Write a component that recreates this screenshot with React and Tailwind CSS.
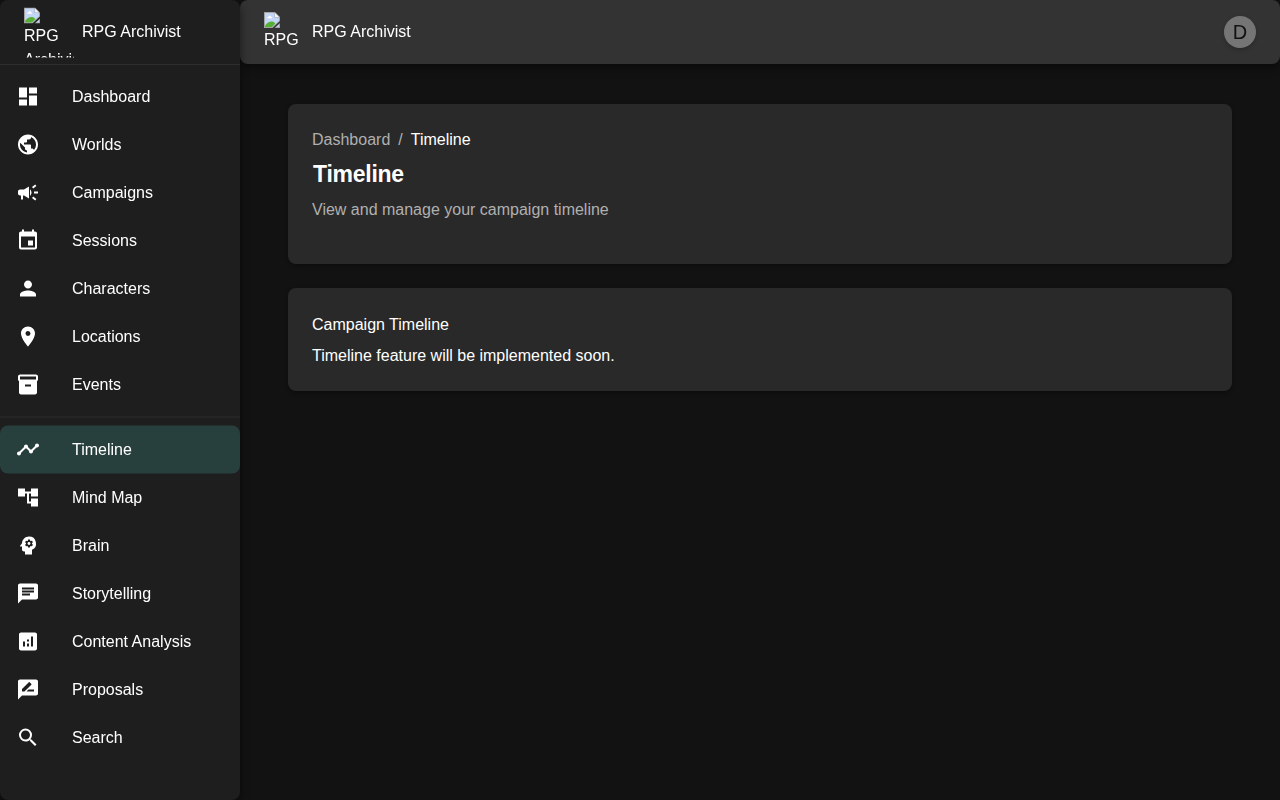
import React from "react";
import {
  MdDashboard,
  MdPublic,
  MdCampaign,
  MdEvent,
  MdPerson,
  MdLocationOn,
  MdInventory2,
  MdTimeline,
  MdAccountTree,
  MdPsychology,
  MdChat,
  MdAnalytics,
  MdRateReview,
  MdSearch,
} from "react-icons/md";

const primary = [
  ["Dashboard", MdDashboard],
  ["Worlds", MdPublic],
  ["Campaigns", MdCampaign],
  ["Sessions", MdEvent],
  ["Characters", MdPerson],
  ["Locations", MdLocationOn],
  ["Events", MdInventory2],
];

const secondary = [
  ["Timeline", MdTimeline],
  ["Mind Map", MdAccountTree],
  ["Brain", MdPsychology],
  ["Storytelling", MdChat],
  ["Content Analysis", MdAnalytics],
  ["Proposals", MdRateReview],
  ["Search", MdSearch],
];

function MissingImageIcon() {
  return (
    <svg width="16" height="16" viewBox="0 0 16 16" className="block">
      {/* page, upper-left of the tear */}
      <path d="M0 0h11l5 5v4L8.500 16H0z" fill="#a3a3a3" />
      <path d="M1 1h9.500v4.500H15V9L8 15H1z" fill="#c3d6f7" />
      <path d="M11 1v4h4z" fill="#f5f5f5" />
      <path d="M3 6.200c0-1 .8-1.400 1.400-1.300C4.700 3.500 6.800 3.500 7.200 4.900 8.200 4.900 8.400 6.200 7.800 6.200z" fill="#fff" />
      <path d="M1 15v-1.500C3 11 5 9.500 7.500 9.500c1.500 0 2.700.6 3.800 2L8 15z" fill="#57b035" />
      {/* torn-off corner */}
      <path d="M16 11v5h-5.500z" fill="#a3a3a3" />
      <path d="M15 12.500V15h-2.800z" fill="#c3d6f7" />
    </svg>
  );
}

function NavItem({ label, Icon, active }) {
  return (
    <li
      className={
        active
          ? "flex h-12 items-center rounded-lg bg-[#28403d] px-4"
          : "flex h-12 items-center rounded-lg px-4"
      }
    >
      <span className="w-14 shrink-0">
        <Icon size={24} />
      </span>
      <span>{label}</span>
    </li>
  );
}

export default function App() {
  return (
    <div className="flex h-[800px] w-full overflow-hidden bg-[#121212] font-['Liberation_Sans',Arial,sans-serif] text-base leading-6 text-white">
      <aside className="z-10 flex w-60 shrink-0 flex-col overflow-hidden rounded-lg bg-[#1e1e1e] shadow-[0_4px_8px_rgba(0,0,0,0.5)] will-change-transform">
        <div className="flex h-16 items-center px-6">
          <div className="h-[50px] w-[50px] shrink-0 translate-y-[0.5px] overflow-hidden">
            <MissingImageIcon />
            <p className="w-[50px]">RPG Archivist</p>
          </div>
          <span className="ml-2 whitespace-nowrap">RPG Archivist</span>
        </div>
        <div className="h-px shrink-0 bg-[#2d2d2d]" />
        <div className="-translate-y-[0.5px]">
          <ul className="py-2">
            {primary.map(([label, Icon]) => (
              <NavItem key={label} label={label} Icon={Icon} />
            ))}
          </ul>
          <div className="h-px shrink-0 bg-[#2d2d2d]" />
          <ul className="py-2">
            {secondary.map(([label, Icon]) => (
              <NavItem key={label} label={label} Icon={Icon} active={label === "Timeline"} />
            ))}
          </ul>
        </div>
      </aside>
      <div className="flex min-w-0 flex-1 flex-col">
        <header className="flex h-16 shrink-0 items-center rounded-lg bg-[#333333] px-6 shadow-[0_4px_8px_rgba(0,0,0,0.4)] will-change-transform">
          <div className="h-10 w-10 shrink-0">
            <MissingImageIcon />
            <p>RPG</p>
          </div>
          <span className="ml-2">RPG Archivist</span>
          <div className="ml-auto flex size-8 items-center justify-center rounded-full bg-[#757575] text-xl leading-5 text-[#121212] shadow-[0_2px_4px_rgba(0,0,0,0.2)]">
            D
          </div>
        </header>
        <main className="flex flex-col gap-6 px-12 pt-10">
          <section className="h-40 rounded-lg bg-[#292929] p-6 shadow-[0_2px_4px_rgba(0,0,0,0.3)]">
            <nav className="flex gap-2 text-[#b0b0b0]">
              <span>Dashboard</span>
              <span>/</span>
              <span className="text-white">Timeline</span>
            </nav>
            <h1 className="mt-2 pl-px text-[23px] leading-[29px] font-bold tracking-[-0.25px]">Timeline</h1>
            <p className="mt-[9px] text-[#b0b0b0]">View and manage your campaign timeline</p>
          </section>
          <section className="h-[103px] rounded-lg bg-[#292929] px-6 pt-[25px] shadow-[0_2px_4px_rgba(0,0,0,0.3)]">
            <h2>Campaign Timeline</h2>
            <p className="mt-[7px]">Timeline feature will be implemented soon.</p>
          </section>
        </main>
      </div>
    </div>
  );
}
